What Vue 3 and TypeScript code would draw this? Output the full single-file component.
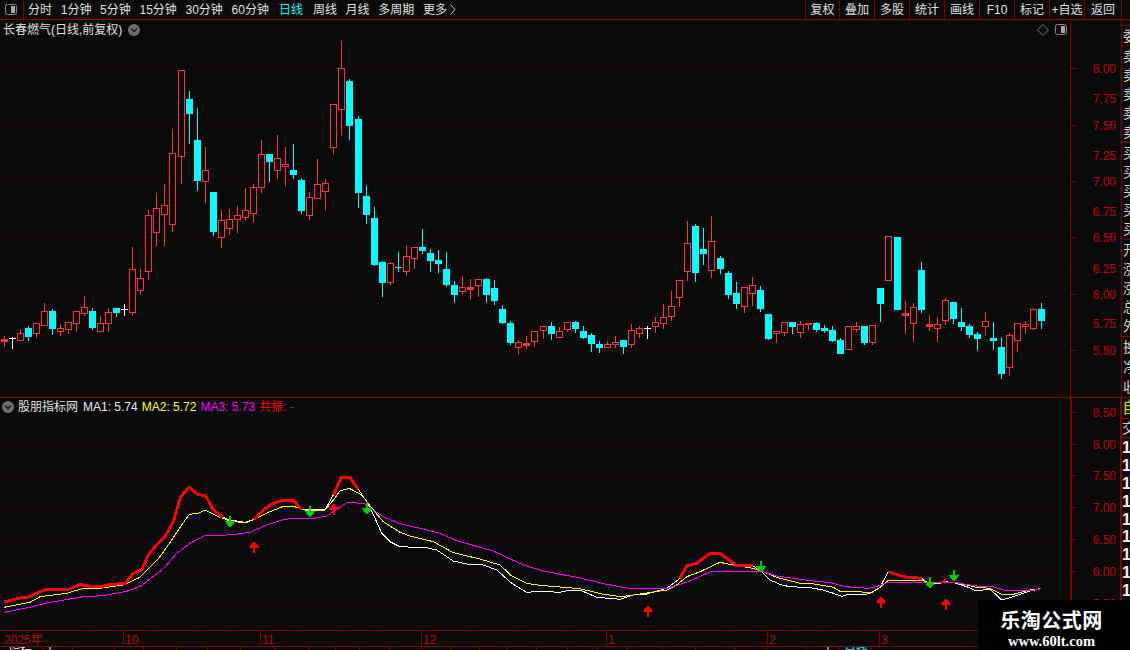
<script setup lang="ts">
type Kind = 'r' | 'c' | 'R' | 'w' | 't'
type Raw = [Kind, number, number, number, number]
type Pt = [number, number]

const leftTabs = ['分时', '1分钟', '5分钟', '15分钟', '30分钟', '60分钟', '日线', '周线', '月线', '多周期']
const rightTabs = ['复权', '叠加', '多股', '统计', '画线', 'F10', '标记', '+自选', '返回']

const sec1: Raw[] = [
  ['R',918,927,933,950],['w',922,926,928,956],['r',898,910,932,932],['c',888,894,920,930],['r',880,880,910,923],
  ['r',820,844,887,887],['c',838,843,896,914],['r',882,895,905,915],['r',877,877,899,911],['r',844,844,881,905],
  ['r',798,832,851,855],['c',834,843,893,899],['r',858,880,903,905],['r',835,848,881,903],['c',834,834,846,858],
  ['w',822,838,840,855],['r',652,718,848,855],['r',717,745,782,792],['r',541,556,725,747],['r',489,535,607,645],
  ['r',462,526,554,645],['r',297,370,584,603],['r',121,121,380,459],['c',183,207,249,339],['c',234,330,450,480],
  ['r',351,421,455,516],['c',486,486,603,615],['r',540,571,623,651],['r',537,568,596,612],['r',528,556,569,606],
  ['r',474,541,563,570],['r',462,472,551,576],['r',330,373,473,486],['c',372,372,393,453],['r',315,385,422,444],
  ['r',351,403,410,465],['c',342,420,432,444],['c',445,450,540,549],['r',487,502,557,567],['r',387,463,506,506],
  ['r',447,460,485,537],['r',223,223,353,369],['r',33,115,239,312],['c',147,153,285,327],['c',258,267,486,531],
  ['c',465,498,552,579],['c',531,564,702,705],['c',693,696,756,798],['r',696,700,758,762],['t',666,711,713,723],
  ['r',645,679,725,735],['r',652,652,686,714],['c',597,651,660,669],['c',657,669,690,723],['c',660,690,699,726],
  ['c',666,717,762,768],['c',753,765,792,816],['r',738,772,785,792],['R',747,771,777,807],['r',748,748,767,798],
  ['c',744,747,792,816],['c',750,774,810,822],['c',825,837,876,879],['c',873,879,936,942],['r',930,937,953,969],
  ['R',918,939,945,954],['r',904,904,935,948],['r',889,889,902,924],['c',876,888,909,927],['r',891,904,923,923],
]
const sec2: Raw[] = [
  ['r',367,367,389,393],['c',363,366,384,396],['c',378,393,411,414],['c',399,405,429,453],['c',423,432,441,456],
  ['r',423,433,443,443],['r',408,427,434,441],['c',420,420,438,459],['r',372,391,434,441],['r',378,385,401,411],
  ['w',378,384,386,414],['r',351,367,380,396],['r',312,352,371,384],['r',273,319,350,360],['r',241,241,293,318],
  ['r',63,130,215,240],['c',72,78,216,243],['c',84,147,159,192],['r',48,124,212,231],['c',168,174,204,219],
  ['c',213,219,282,294],['c',246,279,309,324],['r',262,262,320,336],['r',231,256,281,315],['c',258,270,324,333],
  ['c',342,342,414,417],['r',394,394,401,426],['r',367,367,398,405],['c',366,366,378,399],['r',363,373,398,411],
  ['R',370,370,374,387],['c',366,369,387,393],['c',375,384,390,396],['c',378,390,420,423],
]
const sec3: Raw[] = [
  ['c',354,360,399,399],['r',319,319,389,389],['r',306,319,329,333],['c',318,318,366,372],['r',316,316,368,372],
  ['c',204,204,249,303],['r',49,49,182,182],['c',51,51,267,267],['R',243,279,285,339],['r',250,262,311,363],
  ['c',126,150,267,276],['R',285,312,318,330],['r',291,313,326,363],['r',234,241,302,312],['c',246,246,294,309],
  ['c',264,306,318,330],['c',312,318,342,351],['c',336,342,354,390],['r',276,304,320,342],['c',306,354,360,387],
  ['c',351,381,459,474],['r',339,346,443,462],['r',310,310,362,393],['r',303,313,320,339],['r',264,268,326,329],
  ['c',249,267,300,324],
]

const BG = '#0a0a0a'
const colorOf: Record<Kind, string> = { r: '#ff3333', R: '#ff3333', c: '#00ffff', t: '#00ffff', w: '#ffffff' }

const rows = [
  ...sec1.map(r => ({ r, o: 30 })),
  ...sec2.map(r => ({ r, o: 200 })),
  ...sec3.map(r => ({ r, o: 220 })),
]
const candles = rows.map(({ r, o }, i) => {
  const [kind, wt, bt, bb, wb] = r
  const Y = (v: number) => Math.floor(o + v / 3)
  const x = 4 + 8 * i + Math.floor((i + 0.5) / 22.2)
  const top = Y(bt)
  const bottom = Math.max(Y(bb), top)
  return {
    kind,
    color: colorOf[kind],
    hollow: kind === 'r',
    cx: x + 0.5,
    x,
    wickTop: Y(wt),
    wickBot: Y(wb) + 1,
    top,
    bottom,
    flat: kind === 'w' || kind === 't',
  }
})

const z7 = (a: number[]): Pt[] => pairs(a).map(([x, y]) => [x / 3, 390 + y / 3])
const z8 = (a: number[]): Pt[] => pairs(a).map(([x, y]) => [400 + x / 3, 500 + y / 3])
const z9 = (a: number[]): Pt[] => pairs(a).map(([x, y]) => [800 + x / 3, 390 + y / 3])
function pairs(a: number[]): Pt[] {
  const out: Pt[] = []
  for (let i = 0; i < a.length; i += 2) out.push([a[i], a[i + 1]])
  return out
}
const pts = (p: Pt[]) => p.map(([x, y]) => `${x.toFixed(1)},${y.toFixed(1)}`).join(' ')

const whiteLine = pts([
  ...z7([12,636,60,624,85,621,135,599,205,599,240,583,275,590,305,590,330,583,375,581,400,550,425,540,445,495,470,465,495,440,520,395,542,320,568,292,595,314,617,317,640,360,668,382,690,390,735,397,762,388,790,360,820,340,850,331,880,331,905,357,975,360,1000,315,1024,263,1050,263,1075,298,1100,335,1125,385,1145,430,1170,455]),
  ...z8([0,140,80,143,110,150,160,183,200,192,250,195,290,210,335,250,380,277,420,274,480,277,510,270,540,270,590,292,660,298,700,285,740,282,800,265,840,235,860,198,890,190,930,160,960,160,1010,197,1058,197,1085,215,1110,240,1150,257]),
  ...z9([0,592,30,593,70,600,100,610,125,619,150,612,190,615,215,608,240,592,265,545,310,560,365,565,385,580,415,582,430,575,460,577,500,590,530,603,570,597,605,630,640,620,690,603,722,596]),
])
const yellowLine = pts([
  ...z7([12,652,90,637,120,620,200,610,250,595,300,595,370,585,420,562,480,500,515,450,545,405,568,373,595,370,615,360,650,378,690,393,735,399,770,385,810,365,850,349,880,349,915,360,975,360,1000,330,1020,303,1048,295,1085,315,1120,360,1150,395]),
  ...z8([0,97,30,108,100,125,160,158,240,177,300,195,335,228,380,250,420,256,540,266,610,283,665,290,700,285,800,270,830,255,860,230,900,215,960,187,1010,197,1060,205,1090,215,1130,232]),
  ...z9([0,580,30,580,100,592,120,604,215,607,240,592,265,571,370,571,385,580,420,578,460,576,500,585,530,592,570,595,605,613,640,613,690,600,722,596]),
])
const magentaLine = pts([
  ...z7([12,667,90,652,150,637,250,620,310,617,380,604,420,589,490,537,530,490,570,460,612,438,700,434,750,427,800,405,845,390,880,385,940,385,980,378,1010,358,1040,338,1060,337,1095,342,1120,360,1150,380]),
  ...z8([0,71,60,85,120,100,170,122,280,153,370,195,430,213,530,232,620,253,685,265,800,265,860,247,930,216,1070,215,1090,215,1130,228]),
  ...z9([0,568,100,580,135,590,205,595,230,590,260,578,345,576,385,578,420,578,460,577,530,588,570,588,620,602,690,602,722,596]),
])
const redLines = [
  z7([12,636,60,624,85,621,135,599,205,599,240,583,275,590,305,590,330,583,375,581,400,550,425,540,445,495,470,465,495,440,520,395,542,320,568,292,595,314,617,317,640,360,668,382]),
  z7([762,388,790,360,820,340,850,331,880,331,905,357]),
  z7([1000,315,1024,263,1050,263,1075,298]),
  z8([840,235,860,198,890,190,930,160,960,160,1010,197,1058,197]),
  z9([265,545,310,560,365,565]),
  z9([425,574,437,572]),
].map(pts)

const upArrows: [number, number][] = [[254, 541], [334, 503], [648, 605], [881, 596], [946, 598]]
const downArrows: [number, number][] = [[230, 516], [310, 506], [367, 503], [761, 561], [930, 577], [954, 570]]
const arrowUp = ([x, t]: [number, number]) =>
  `${x},${t} ${x + 5.5},${t + 7} ${x + 1},${t + 7} ${x + 1},${t + 12} ${x - 1},${t + 12} ${x - 1},${t + 7} ${x - 5.5},${t + 7}`
const arrowDown = ([x, t]: [number, number]) =>
  `${x - 1},${t} ${x + 1},${t} ${x + 1},${t + 5} ${x + 5.5},${t + 5} ${x},${t + 12} ${x - 5.5},${t + 5} ${x - 1},${t + 5}`

const topGrid = [68, 125, 181, 237, 294, 350]
const topMinor = [97, 153, 209, 266, 322]
const topLabels: [string, number][] = [['8.00',73],['7.75',103],['7.50',130],['7.25',160],['7.00',186],['6.75',216],['6.50',242],['6.25',273],['6.00',299],['5.75',328],['5.50',355]]
const lowGrid = [444, 475, 507, 539, 571, 603]
const lowMajor = [412, 444, 475, 507, 539, 571, 603]
const lowMinor = [428, 460, 491, 523, 555, 587]
const lowLabels: [string, number][] = [['8.50',417],['8.00',449],['7.50',480],['7.00',512],['6.50',544],['6.00',576],['5.50',608]]

const months: [string, number][] = [['2025年', 0], ['10', 123], ['11', 260], ['12', 421], ['1', 606], ['2', 767], ['3', 879]]
const dateTicks = [88, 158, 193, 227, 301, 341, 381, 467, 514, 561, 646, 687, 729, 795, 823, 864]

const stripEdges = [43, 73, 115, 144, 177, 208, 241, 276, 309, 336, 360, 390, 422, 451, 480, 508, 537, 568, 598, 628, 663, 696, 735, 766, 807, 840, 871, 1130]
const stripText: Record<number, { t: string; c: string; p: number }> = {
  0: { t: '指标', c: '#e8e8e8', p: 8 },
  1: { t: '丨', c: '#e8e8e8', p: 1 },
  25: { t: '丨', c: '#e8e8e8', p: 15 },
  26: { t: '日线', c: '#00ffff', p: 4 },
}
const stripCells = stripEdges.map((e, i) => ({
  w: e - (i ? stripEdges[i - 1] : 0),
  ...(stripText[i] ?? { t: '', c: '', p: 0 }),
}))

const sideTop = [['委'], ['卖', '卖', '卖', '卖', '卖'], ['买', '买', '买', '买', '买'], ['开', '涨', '涨', '总', '外'], ['换', '净', '收']]
const sideNums = Array.from({ length: 10 }, () => '1')
</script>

<template>
  <div class="app">
    <header class="toolbar">
      <div class="tb-icon">
        <svg width="12" height="11" viewBox="0 0 12 11">
          <rect x="0.5" y="0.5" width="11" height="10" rx="2" fill="none" stroke="#8a8a8a" />
          <rect x="6" y="2" width="4" height="7" fill="#a8a8a8" />
        </svg>
      </div>
      <nav class="tabs">
        <span v-for="t in leftTabs" :key="t" :class="{ on: t === '日线' }">{{ t }}</span>
        <span class="more">更多
          <svg width="6" height="11" viewBox="0 0 6 11"><polyline points="0.5,0.5 5,5.5 0.5,10.5" fill="none" stroke="#d8d8d8" /></svg>
        </span>
      </nav>
      <div class="actions">
        <span v-for="t in rightTabs" :key="t">{{ t }}</span>
      </div>
    </header>

    <section class="pane pane-top">
      <div class="plot">
        <div class="title-row">
          <span class="title">长春燃气(日线,前复权)</span>
          <svg class="chev" width="12" height="12" viewBox="0 0 12 12">
            <circle cx="6" cy="6" r="6" fill="#6e6e6e" />
            <polyline points="3,4.5 6,7.5 9,4.5" fill="none" stroke="#1a1a1a" stroke-width="1.4" />
          </svg>
          <span class="spring"></span>
          <svg width="12" height="12" viewBox="0 0 12 12">
            <polygon points="6,0.5 11.5,6 6,11.5 0.5,6" fill="none" stroke="#6e6e6e" />
          </svg>
          <svg width="12" height="11" viewBox="0 0 12 11">
            <rect x="0.5" y="0.5" width="11" height="10" rx="2" fill="none" stroke="#8a8a8a" />
            <rect x="6" y="2" width="4" height="7" fill="#a8a8a8" />
          </svg>
        </div>
        <svg class="canvas" width="1070" height="358" viewBox="0 39 1070 358">
          <line v-for="y in topGrid" :key="y" x1="0" x2="1067" :y1="y + 0.5" :y2="y + 0.5" class="grid" />
          <g v-for="(c, i) in candles" :key="i" shape-rendering="crispEdges">
            <line v-if="c.wickTop < c.top" :x1="c.cx" :x2="c.cx" :y1="c.wickTop" :y2="c.top" :stroke="c.color" />
            <line v-if="c.wickBot > c.bottom" :x1="c.cx" :x2="c.cx" :y1="c.bottom" :y2="c.wickBot" :stroke="c.color" />
            <rect v-if="c.hollow" :x="c.x - 2.5" :y="c.top + 0.5" width="6" :height="c.bottom - c.top" :fill="BG" :stroke="c.color" />
            <rect v-else-if="c.flat" :x="c.x - 3" :y="c.top" width="7" height="1" :fill="c.color" />
            <rect v-else :x="c.x - 3" :y="c.top" width="7" :height="c.bottom - c.top + 1" :fill="c.color" />
          </g>
        </svg>
      </div>
      <div class="axis">
        <svg class="canvas" width="50" height="377" viewBox="1071 20 50 377">
          <line v-for="y in topGrid" :key="y" x1="1071" x2="1076" :y1="y + 0.5" :y2="y + 0.5" class="tick" />
          <line v-for="y in topMinor" :key="y" x1="1071" x2="1073" :y1="y + 0.5" :y2="y + 0.5" class="tick" />
          <text v-for="[t, y] in topLabels" :key="t" x="1116" :y="y" text-anchor="end" class="num">{{ t }}</text>
        </svg>
      </div>
      <aside class="side">
        <div class="side-pad"></div>
        <div v-for="(g, i) in sideTop" :key="i" class="side-cell" :class="{ small: i === 0, last: i === 4 }">
          <span v-for="(ch, j) in g" :key="j">{{ ch }}</span>
        </div>
      </aside>
    </section>

    <section class="pane pane-low">
      <div class="plot">
        <div class="legend">
          <svg width="12" height="12" viewBox="0 0 12 12">
            <circle cx="6" cy="6" r="6" fill="#6e6e6e" />
            <polyline points="3,4.5 6,7.5 9,4.5" fill="none" stroke="#1a1a1a" stroke-width="1.4" />
          </svg>
          <span class="lg-name">股朋指标网</span>
          <span class="lg-w">MA1: 5.74</span>
          <span class="lg-y">MA2: 5.72</span>
          <span class="lg-m">MA3: 5.73</span>
          <span class="lg-r">共振: -</span>
        </div>
        <svg class="canvas" width="1070" height="215" viewBox="0 415 1070 215">
          <line v-for="y in lowGrid" :key="y" x1="0" x2="1067" :y1="y + 0.5" :y2="y + 0.5" class="grid" />
          <g shape-rendering="crispEdges" fill="none">
            <polyline :points="whiteLine" stroke="#ffffff" />
            <polyline :points="yellowLine" stroke="#ffff00" />
            <polyline :points="magentaLine" stroke="#ff00ff" />
            <polyline v-for="(p, i) in redLines" :key="i" :points="p" stroke="#ff0000" stroke-width="3" stroke-linejoin="round" />
          </g>
          <polygon v-for="(a, i) in upArrows" :key="i" :points="arrowUp(a)" fill="#ff0000" shape-rendering="crispEdges" />
          <polygon v-for="(a, i) in downArrows" :key="i" :points="arrowDown(a)" fill="#00cc00" shape-rendering="crispEdges" />
        </svg>
      </div>
      <div class="axis">
        <svg class="canvas" width="48" height="232" viewBox="1072 398 48 232">
          <line v-for="y in lowMajor" :key="y" x1="1072" x2="1076" :y1="y + 0.5" :y2="y + 0.5" class="tick" />
          <line v-for="y in lowMinor" :key="y" x1="1072" x2="1073" :y1="y + 0.5" :y2="y + 0.5" class="tick" />
          <text v-for="[t, y] in lowLabels" :key="t" x="1116" :y="y" text-anchor="end" class="num">{{ t }}</text>
        </svg>
      </div>
      <aside class="side">
        <div class="side-self">自</div>
        <div class="side-box">交</div>
        <div class="side-nums">
          <span v-for="(n, i) in sideNums" :key="i">{{ n }}</span>
        </div>
      </aside>
    </section>

    <svg class="timeline" width="1130" height="15" viewBox="0 631 1130 15">
      <line v-for="x in dateTicks" :key="x" :x1="x + 0.5" :x2="x + 0.5" y1="631" y2="633" class="tick" />
      <g v-for="[t, x] in months" :key="t">
        <line v-if="x" :x1="x + 0.5" :x2="x + 0.5" y1="631" y2="646" class="tick" />
        <text :x="x ? x + 2 : 4" y="644" class="num">{{ t }}</text>
      </g>
    </svg>

    <footer class="strip">
      <span v-for="(c, i) in stripCells" :key="i" class="strip-cell" :style="{ width: c.w + 'px', paddingLeft: c.p + 'px', color: c.c }">{{ c.t }}</span>
    </footer>

    <div class="watermark">
      <strong>乐淘公式网</strong>
      <em>www.60lt.com</em>
    </div>
  </div>
</template>

<style>
html, body { background: #0a0a0a; }
</style>

<style scoped>
.app {
  position: relative;
  width: 1130px;
  height: 650px;
  overflow: hidden;
  background: #0a0a0a;
  color: #e0e0e0;
  font: 12px/1 "Liberation Sans", "Noto Sans CJK SC", sans-serif;
}
.canvas { display: block; }

.toolbar {
  display: flex;
  height: 20px;
  box-sizing: border-box;
  border-bottom: 1px solid #800000;
  align-items: stretch;
}
.tb-icon {
  width: 24px;
  box-sizing: border-box;
  border-right: 1px solid #800000;
  padding: 4px 0 0 5px;
}
.tb-icon svg { display: block; }
.tabs {
  display: flex;
  align-items: center;
  gap: 8.7px;
  padding-left: 4px;
  flex: 1;
}
.tabs .on { color: #00ffff; margin: 0 1.3px; }
.more { display: flex; align-items: center; gap: 3px; }
.actions { display: flex; padding-right: 8px; }
.actions span {
  box-sizing: border-box;
  width: 35px;
  border-left: 1px solid #800000;
  display: flex;
  align-items: center;
  justify-content: center;
}
.actions span:first-child { width: 34px; }
.actions span:last-child { width: 38px; border-right: 1px solid #800000; }

.pane { display: flex; box-sizing: border-box; border-bottom: 1px solid #800000; }
.pane-top { height: 378px; }
.pane-low { height: 233px; }
.plot { width: 1070px; flex: none; }
.axis { box-sizing: border-box; width: 51px; flex: none; border-left: 1px solid #800000; }
.side { box-sizing: border-box; width: 9px; flex: none; border-left: 1px solid #800000; overflow: hidden; display: flex; flex-direction: column; }
.pane-low .axis { width: 50px; border-left-width: 2px; }
.pane-low .side { width: 10px; border-left-width: 2px; }

.title-row {
  height: 19px;
  display: flex;
  align-items: center;
  padding: 0 3px;
  gap: 6px;
}
.title-row .spring { flex: 1; }

.legend {
  height: 17px;
  display: flex;
  align-items: center;
  padding-left: 2px;
  gap: 4px;
  white-space: nowrap;
}
.lg-name { margin-right: 1px; }
.lg-w { color: #e8e8e8; }
.lg-y { color: #ffff00; }
.lg-m { color: #ff00ff; }
.lg-r { color: #ff0000; }

.grid { stroke: #5c0000; stroke-dasharray: 1 3; }
.tick { stroke: #800000; shape-rendering: crispEdges; }
.num { fill: #c40000; font-size: 12px; }

.side-pad { height: 5px; flex: none; border-bottom: 1px solid #800000; }
.side-cell {
  height: 97px;
  flex: none;
  box-sizing: border-box;
  border-bottom: 1px solid #800000;
  display: flex;
  flex-direction: column;
  width: 14px;
  padding-left: 1px;
  font-size: 14px;
  color: #d0d0d0;
}
.side-cell span { flex: 1; display: flex; align-items: center; }
.side-cell.small { height: 20px; }
.side-cell.last { height: 60px; border-bottom: 0; }
.side-self { height: 20px; flex: none; width: 14px; font-size: 16px; display: flex; align-items: center; color: #d8d800; }
.side-box {
  height: 20px;
  flex: none;
  width: 14px;
  box-sizing: border-box;
  border-top: 1px solid #800000;
  border-bottom: 1px solid #800000;
  display: flex;
  align-items: center;
  font-size: 14px;
  color: #d0d0d0;
}
.side-nums { display: flex; flex-direction: column; padding-top: 1px; font-size: 16px; font-weight: 700; color: #f0f0f0; }
.side-nums span { height: 17.9px; display: flex; align-items: center; }

.timeline { display: block; border-bottom: 1px solid #800000; box-sizing: content-box; }
.strip { display: flex; height: 3px; overflow: hidden; }
.strip-cell {
  flex: none;
  box-sizing: border-box;
  border-right: 1px solid #800000;
  white-space: nowrap;
  overflow: hidden;
  height: 14px;
  line-height: 12px;
  margin-top: -2px;
}

.watermark {
  position: absolute;
  left: 978px;
  top: 600px;
  width: 152px;
  height: 50px;
  background: #000;
  color: #fff;
  display: flex;
  flex-direction: column;
  align-items: center;
  padding: 9px 5px 0 0;
  box-sizing: border-box;
}
.watermark strong { font: 700 20px/22px "Noto Sans CJK SC", sans-serif; letter-spacing: 0.5px; }
.watermark em { font: 700 14.5px/18px "Liberation Serif", serif; margin-top: 1px; }
</style>
